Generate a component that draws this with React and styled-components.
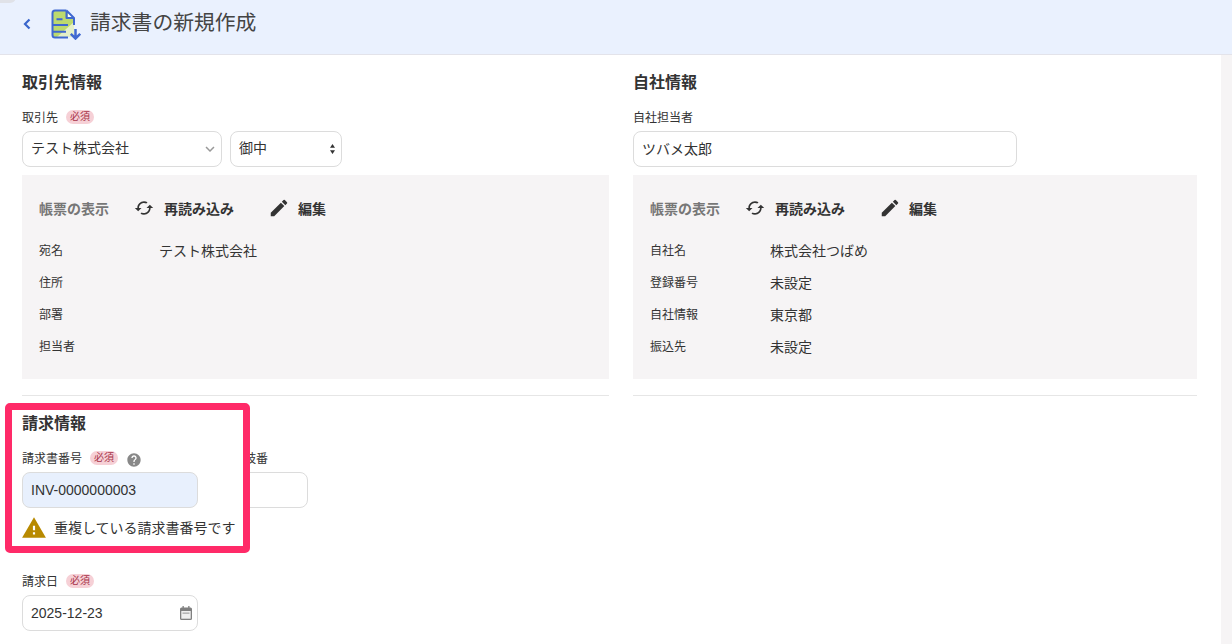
import React from "react";
import styled, { createGlobalStyle } from "styled-components";
import { MdCached, MdEdit, MdHelp, MdWarning, MdExpandMore } from "react-icons/md";

const Global = createGlobalStyle`
  html, body { margin: 0; padding: 0; background: #fff; }
  body { width: 1232px; height: 644px; overflow: hidden; font-family: "Liberation Sans", "Noto Sans CJK JP", sans-serif; color: #333; }
  * { box-sizing: border-box; }
`;

const Page = styled.div`
  position: relative;
  width: 1232px;
  height: 644px;
  overflow: hidden;
`;
const CornerShade = styled.div`
  position: absolute;
  left: 0;
  top: -3px;
  width: 16px;
  height: 6px;
  border-radius: 0 0 6px 0;
  background: #e0e2e8;
`;
const Header = styled.header`
  display: flex;
  align-items: center;
  height: 55px;
  padding-bottom: 1px;
  background: #eaf1fe;
  border-bottom: 1px solid #e3e3ea;
`;
const Back = styled.svg`
  flex: none;
  margin-left: 22px;
  margin-top: -5px;
`;
const TitleIcon = styled.svg`
  margin-left: 19px;
  margin-top: -4px;
`;
const Title = styled.h1`
  margin: 0 0 0 9px;
  position: relative;
  top: -4px;
  font-size: 20.8px;
  font-weight: 400;
  line-height: 28px;
  color: #444;
`;
const Body = styled.div`
  display: flex;
  height: 589px;
`;
const Columns = styled.main`
  flex: 1;
  display: grid;
  grid-template-columns: 587px 564px;
  column-gap: 24px;
  align-content: start;
  padding-left: 22px;
`;
const Strip = styled.div`
  width: 11px;
  background: #f6f4f5;
`;
const Column = styled.section`
  display: flex;
  flex-direction: column;
  padding-top: 15px;
`;
const Heading = styled.h2`
  margin: 1px 0 -1px;
  font-size: 16px;
  font-weight: 700;
  line-height: 24px;
  color: #333;
`;
const LabelRow = styled.div`
  display: flex;
  align-items: center;
  height: 14px;
  margin-top: 16px;
  margin-bottom: 7px;
  padding-bottom: 2px;
  font-size: 12px;
  color: #333;
  white-space: nowrap;
`;
const Badge = styled.span`
  display: inline-flex;
  align-items: center;
  justify-content: center;
  width: 28px;
  height: 14px;
  margin-left: 8px;
  margin-bottom: -2px;
  border-radius: 7px;
  background: #f6d0d6;
  color: #a8344a;
  font-size: 10px;
  line-height: 14px;
`;
const Help = styled.span`
  display: flex;
  margin-left: 8px;
  margin-top: 5px;
  color: #888;
`;
const Controls = styled.div`
  display: flex;
  gap: 8px;
`;
const ControlWrap = styled.div`
  position: relative;
  width: ${(p) => p.$w}px;
  height: 36px;
`;
const Field = styled.input`
  display: block;
  width: 100%;
  height: 36px;
  padding: 0 8px ${(p) => (p.$cjk ? "2px" : "0")};
  border: 1px solid #dcdcdc;
  border-radius: 8px;
  outline: none;
  background: ${(p) => (p.$filled ? "#e8f0fd" : "#fff")};
  color: #333;
  font: 14px "Liberation Sans", "Noto Sans CJK JP", sans-serif;
`;
const Select = styled.select`
  display: block;
  width: 100%;
  height: 36px;
  padding: 0 8px 2px;
  border: 1px solid #dcdcdc;
  border-radius: 8px;
  outline: none;
  appearance: none;
  background: #fff;
  color: #333;
  font: 14px "Liberation Sans", "Noto Sans CJK JP", sans-serif;
`;
const Chevron = styled.span`
  position: absolute;
  top: 0;
  bottom: 0;
  right: ${(p) => p.$r}px;
  display: flex;
  align-items: center;
  color: ${(p) => p.$c};
  pointer-events: none;
`;
const Panel = styled.div`
  height: 204px;
  margin-top: 8px;
  padding: 17px 17px 16px;
  background: #f6f4f5;
`;
const Toolbar = styled.div`
  display: flex;
  align-items: center;
  height: 32px;
  margin-bottom: 10px;
`;
const ToolbarTitle = styled.span`
  margin-right: 25px;
  font-size: 14px;
  font-weight: 700;
  color: #777;
`;
const ToolButton = styled.span`
  display: flex;
  align-items: center;
  gap: ${(p) => p.$gap}px;
  margin-right: 34px;
  font-size: 14px;
  font-weight: 700;
  color: #333;
`;
const Row = styled.div`
  display: flex;
  align-items: center;
  height: 32px;
`;
const RowLabel = styled.span`
  width: 120px;
  margin-bottom: 2px;
  font-size: 12px;
  color: #333;
`;
const RowValue = styled.span`
  font-size: 14px;
  color: #333;
`;
const Divider = styled.hr`
  height: 1px;
  margin: 16px 0 0;
  border: 0;
  background: #e6e6e6;
`;
const BillingRow = styled.div`
  display: flex;
  align-items: flex-start;
  margin: 7px 0 0 -17px;
`;
const Callout = styled.div`
  position: relative;
  z-index: 1;
  flex: none;
  width: 245px;
  height: 150px;
  padding: 1px 0 0 10px;
  border: 7px solid #ff2a68;
  border-radius: 5px;
  background: #fff;
`;
const BranchField = styled.div`
  width: 102px;
  margin-left: -44px;
  padding-top: 48px;
`;
const BranchLabel = styled(LabelRow)`
  margin-top: 0;
  padding-left: 2px;
`;
const Message = styled.div`
  display: flex;
  align-items: center;
  gap: 9px;
  height: 22px;
  margin-top: 9px;
  font-size: 14px;
  color: #333;
  white-space: nowrap;
`;
const MessageText = styled.span`
  margin-bottom: 2px;
`;
const WarnIcon = styled.span`
  display: flex;
  margin-left: 1px;
  color: #b88a00;
`;
const DateLabel = styled(LabelRow)`
  margin-top: 21px;
`;
const CalendarIcon = styled.svg`
  display: block;
`;

const DocIcon = () => (
  <TitleIcon width="30" height="31" viewBox="52 9 30 31" fill="none">
    <path d="M54 11h13l8 8v18H54z" fill="#bcd96e" />
    <path d="M75 22 58 37h17z" fill="#e4efc8" />
    <path d="M69 11v7h6z" fill="#fff" />
    <path d="M67.500 10.500H56a2.500 2.500 0 0 0-2.500 2.500V35a2.500 2.500 0 0 0 2.500 2.500h13M67.500 10.500 75 18v7M67.500 10.500V18H75" stroke="#3f68d0" strokeWidth="2" strokeLinejoin="round" />
    <path d="M57.500 19.300h6M54 25h15M54 31.700h13" stroke="#3f68d0" strokeWidth="2" />
    <path d="M76.500 29v9.500M71.800 33.800l4.700 4.700 4.700-4.700" stroke="#3f68d0" strokeWidth="2.500" />
  </TitleIcon>
);

const Spinner = () => (
  <svg width="5" height="10" viewBox="0 0 5 10" fill="#333">
    <path d="M2.500 0 5 3.800H0zM2.500 10 0 6.200h5z" />
  </svg>
);

const Calendar = () => (
  <CalendarIcon width="12" height="14" viewBox="0 0 12 14" fill="none">
    <path d="M2.500 0h1.300v1.500h4.400V0h1.300v1.500h1A1.500 1.500 0 0 1 12 3v9.500a1.500 1.500 0 0 1-1.500 1.500h-9A1.500 1.500 0 0 1 0 12.500V3a1.500 1.500 0 0 1 1.500-1.500h1z" fill="#808080" />
    <rect x="1.300" y="5" width="9.400" height="7.700" fill="#efefef" />
    <rect x="2.500" y="6.500" width="7" height="1.300" fill="#aaa" />
  </CalendarIcon>
);

const DisplayPanel = ({ rows }) => (
  <Panel>
    <Toolbar>
      <ToolbarTitle>帳票の表示</ToolbarTitle>
      <ToolButton $gap={10}>
        <MdCached size={20} />
        再読み込み
      </ToolButton>
      <ToolButton $gap={8}>
        <MdEdit size={22} />
        編集
      </ToolButton>
    </Toolbar>
    {rows.map(([label, value]) => (
      <Row key={label}>
        <RowLabel>{label}</RowLabel>
        <RowValue>{value}</RowValue>
      </Row>
    ))}
  </Panel>
);

export default function App() {
  return (
    <Page>
      <Global />
      <CornerShade />
      <Header>
        <Back width="10" height="12" viewBox="0 0 10 12" fill="none">
          <path d="M7.500 1.500 3 6l4.500 4.500" stroke="#3a66cc" strokeWidth="2.200" />
        </Back>
        <DocIcon />
        <Title>請求書の新規作成</Title>
      </Header>
      <Body>
        <Columns>
          <Column>
            <Heading>取引先情報</Heading>
            <LabelRow>
              取引先<Badge>必須</Badge>
            </LabelRow>
            <Controls>
              <ControlWrap $w={200}>
                <Select defaultValue="test">
                  <option value="test">テスト株式会社</option>
                </Select>
                <Chevron $r={3} $c="#999">
                  <MdExpandMore size={18} />
                </Chevron>
              </ControlWrap>
              <ControlWrap $w={112}>
                <Select defaultValue="gochu">
                  <option value="gochu">御中</option>
                </Select>
                <Chevron $r={7} $c="#333">
                  <Spinner />
                </Chevron>
              </ControlWrap>
            </Controls>
            <DisplayPanel
              rows={[
                ["宛名", "テスト株式会社"],
                ["住所", ""],
                ["部署", ""],
                ["担当者", ""],
              ]}
            />
            <Divider />
            <BillingRow>
              <Callout>
                <Heading>請求情報</Heading>
                <LabelRow>
                  請求書番号<Badge>必須</Badge>
                  <Help>
                    <MdHelp size={16} />
                  </Help>
                </LabelRow>
                <ControlWrap $w={176}>
                  <Field $filled readOnly value="INV-0000000003" />
                </ControlWrap>
                <Message>
                  <WarnIcon>
                    <MdWarning size={26} style={{ margin: "-2px" }} />
                  </WarnIcon>
                  <MessageText>重複している請求書番号です</MessageText>
                </Message>
              </Callout>
              <BranchField>
                <BranchLabel>請求書枝番</BranchLabel>
                <ControlWrap $w={102}>
                  <Field readOnly value="" />
                </ControlWrap>
              </BranchField>
            </BillingRow>
            <DateLabel>
              請求日<Badge>必須</Badge>
            </DateLabel>
            <ControlWrap $w={176}>
              <Field readOnly value="2025-12-23" />
              <Chevron $r={6} $c="#777">
                <Calendar />
              </Chevron>
            </ControlWrap>
          </Column>
          <Column>
            <Heading>自社情報</Heading>
            <LabelRow>自社担当者</LabelRow>
            <ControlWrap $w={384}>
              <Field $cjk readOnly value="ツバメ太郎" />
            </ControlWrap>
            <DisplayPanel
              rows={[
                ["自社名", "株式会社つばめ"],
                ["登録番号", "未設定"],
                ["自社情報", "東京都"],
                ["振込先", "未設定"],
              ]}
            />
            <Divider />
          </Column>
        </Columns>
        <Strip />
      </Body>
    </Page>
  );
}
